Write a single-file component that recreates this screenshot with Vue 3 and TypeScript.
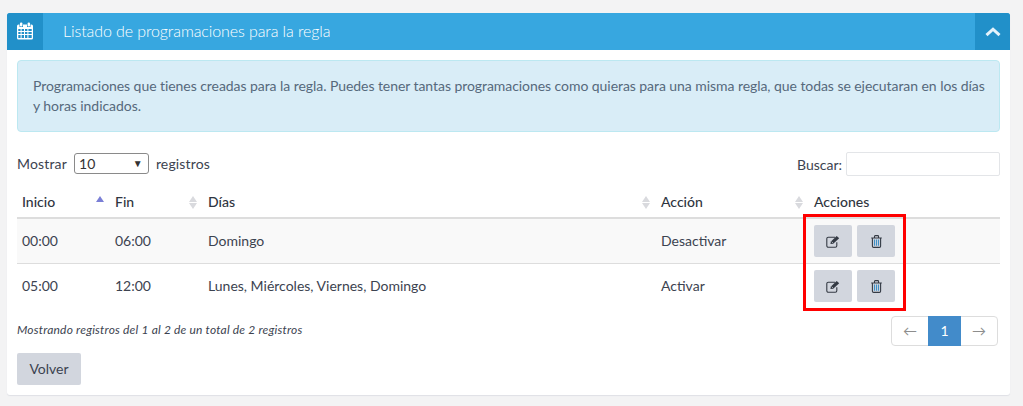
<script setup lang="ts">
interface Row { inicio: string; fin: string; dias: string; accion: string }
const rows: Row[] = [
  { inicio: '00:00', fin: '06:00', dias: 'Domingo', accion: 'Desactivar' },
  { inicio: '05:00', fin: '12:00', dias: 'Lunes, Miércoles, Viernes, Domingo', accion: 'Activar' },
]
</script>

<template>
  <div class="page">
    <section class="panel">
      <header class="head">
        <span class="head-icon">
          <svg width="16" height="18" viewBox="0 0 16 18">
            <rect x="3" y="0.5" width="2.4" height="4" rx="1" fill="#fff"/>
            <rect x="10.6" y="0.5" width="2.4" height="4" rx="1" fill="#fff"/>
            <path fill="#fff" fill-rule="evenodd" d="M1.5 2.5H2.5V5H6V2.5H10V5H13.5V2.5H14.5A1.5 1.5 0 0 1 16 4V16A1.5 1.5 0 0 1 14.5 17.5H1.5A1.5 1.5 0 0 1 0 16V4A1.5 1.5 0 0 1 1.5 2.5ZM1.3 7V9H3.6V7ZM4.6 7V9H7V7ZM8 7V9H10.4V7ZM11.4 7V9H14.7V7ZM1.3 10V12H3.6V10ZM4.6 10V12H7V10ZM8 10V12H10.4V10ZM11.4 10V12H14.7V10ZM1.3 13V16H3.6V13ZM4.6 13V16H7V13ZM8 13V16H10.4V13ZM11.4 13V16H14.7V13Z"/>
          </svg>
        </span>
        <h2 class="title">Listado de programaciones para la regla</h2>
        <span class="head-toggle">
          <svg width="16" height="10" viewBox="0 0 16 10">
            <path d="M1.5 8.2 8 2.2 14.5 8.2" fill="none" stroke="#e4f2fb" stroke-width="3"/>
          </svg>
        </span>
      </header>

      <div class="body">
        <div class="alert">
          Programaciones que tienes creadas para la regla. Puedes tener tantas programaciones como quieras para una misma regla, que todas se ejecutaran en los días y horas indicados.
        </div>

        <div class="toolbar">
          <label class="length">
            Mostrar
            <span class="select">10<i class="caret">▼</i></span>
            registros
          </label>
          <label class="search">Buscar: <span class="search-input"></span></label>
        </div>

        <div class="table-wrap">
          <table class="table">
            <colgroup>
              <col class="c1" /><col class="c2" /><col class="c3" /><col class="c4" /><col class="c5" />
            </colgroup>
            <thead>
              <tr>
                <th>Inicio<span class="sort"><b class="up active"></b></span></th>
                <th>Fin<span class="sort"><b class="up"></b><b class="down"></b></span></th>
                <th>Días<span class="sort"><b class="up"></b><b class="down"></b></span></th>
                <th>Acción<span class="sort"><b class="up"></b><b class="down"></b></span></th>
                <th>Acciones</th>
              </tr>
            </thead>
            <tbody>
              <tr v-for="r in rows" :key="r.inicio">
                <td class="txt">{{ r.inicio }}</td>
                <td class="txt">{{ r.fin }}</td>
                <td class="txt">{{ r.dias }}</td>
                <td class="txt">{{ r.accion }}</td>
                <td class="acts">
                  <div class="act-row">
                    <button class="btn ic" type="button" aria-label="Editar">
                      <svg width="15" height="13" viewBox="0 0 15 13">
                        <path d="M9 2.2H2.3A1.5 1.5 0 0 0 .8 3.7V10.7A1.5 1.5 0 0 0 2.3 12.2H9.3A1.5 1.5 0 0 0 10.8 10.7V7.2" fill="none" stroke="#343a44" stroke-width="1.1"/>
                        <path d="M4.4 9 4.9 6.5 10.7 .9 13.2 3.2 7.2 8.8Z" fill="#343a44"/>
                        <path d="M5.6 6.6 7 8" stroke="#d2d6de" stroke-width=".7"/>
                      </svg>
                    </button>
                    <button class="btn ic" type="button" aria-label="Borrar">
                      <svg width="11" height="13" viewBox="0 0 11 13">
                        <path d="M.2 3H10.8M3.5 3V1.3Q3.5 .6 4.2 .6H6.8Q7.5 .6 7.5 1.3V3M1.4 3V11.2Q1.4 12.4 2.6 12.4H8.4Q9.6 12.4 9.6 11.2V3" fill="none" stroke="#343a44" stroke-width="1.1"/>
                        <path d="M3.5 4.6V10.8M5.5 4.6V10.8M7.5 4.6V10.8" stroke="#3f8fc4" stroke-width="1.1"/>
                      </svg>
                    </button>
                  </div>
                </td>
              </tr>
            </tbody>
          </table>
          <div class="highlight"></div>
        </div>

        <div class="foot">
          <em class="info">Mostrando registros del 1 al 2 de un total de 2 registros</em>
          <nav class="pager">
            <span class="pg">←</span>
            <span class="pg current">1</span>
            <span class="pg">→</span>
          </nav>
        </div>

        <button class="btn back" type="button">Volver</button>
      </div>
    </section>
  </div>
</template>

<style>
html, body { margin: 0; background: #f3f3f4; }
</style>

<style scoped>
.page {
  height: 406px;
  box-sizing: border-box;
  padding: 13px 13px 0 7px;
  background: #f3f3f4;
  font-family: Lato, sans-serif;
  font-size: 14px;
  color: #3c4350;
  overflow: hidden;
}
.panel {
  height: 382px;
  box-sizing: border-box;
  background: #fff;
  border-radius: 3px;
  box-shadow: 0 1px 1px #dfe0e6;
}
.head {
  display: flex;
  align-items: stretch;
  height: 37px;
  background: #37a7e0;
  border-radius: 3px 3px 0 0;
  overflow: hidden;
}
.head-icon, .head-toggle {
  display: flex;
  align-items: center;
  justify-content: center;
  background: #2190c9;
}
.head-icon { width: 36px; padding-bottom: 2px; box-sizing: border-box; }
.head-toggle { width: 35px; margin-left: auto; }
.title {
  margin: 0 0 0 20px;
  font-size: 16px;
  font-weight: 300;
  line-height: 36px;
  letter-spacing: -0.1px;
  color: #fff;
}
.body { padding: 10px 10px 0; }
.alert {
  box-sizing: border-box;
  height: 72px;
  padding: 15px 10px 15px 15px;
  background: #d9edf7;
  border: 1px solid #bce8f1;
  border-radius: 4px;
  line-height: 20px;
  letter-spacing: -0.06px;
  color: #56697c;
}
.toolbar {
  display: flex;
  justify-content: space-between;
  margin-top: 20px;
  height: 24px;
}
.length { display: flex; align-items: center; gap: 7px; height: 22px; letter-spacing: .15px; }
.select {
  position: relative;
  box-sizing: border-box;
  display: block;
  width: 75px;
  height: 21px;
  padding-left: 4px;
  line-height: 19px;
  border: 1px solid #8a8a8a;
  border-radius: 3px;
  background: #fff;
  color: #333;
}
.caret {
  position: absolute;
  right: 5px;
  top: 0;
  font-style: normal;
  font-size: 10px;
  color: #333;
}
.search { display: flex; align-items: center; gap: 3px; }
.search-input {
  display: block;
  box-sizing: border-box;
  width: 154px;
  height: 24px;
  margin-left: 1px;
  border: 1px solid #e3e5e8;
  border-radius: 2px;
  background: #fff;
}
.table-wrap { position: relative; margin-top: 3px; }
.table {
  width: 983px;
  table-layout: fixed;
  border-collapse: separate;
  border-spacing: 0;
}
.c1, .c2 { width: 93px; }
.c3 { width: 453px; }
.c4 { width: 153px; }
th {
  position: relative;
  height: 40px;
  box-sizing: border-box;
  padding: 7px 5px 0;
  text-align: left;
  font-weight: 500;
  border-bottom: 2px solid #ddd;
  color: #2f3540;
}
td {
  height: 44px;
  box-sizing: border-box;
  padding: 0 5px;
}
td.txt { padding-bottom: 2px; }
tbody tr:nth-child(1) td { background: #f9f9f9; }
tbody tr:nth-child(2) td { height: 45px; border-top: 1px solid #ddd; }
.act-row { display: flex; gap: 5px; }
.sort {
  position: absolute;
  right: 5px;
  top: 17px;
  width: 9px;
  height: 13px;
}
.sort b {
  position: absolute;
  left: 0;
  width: 0;
  height: 0;
  border-left: 4.5px solid transparent;
  border-right: 4.5px solid transparent;
}
.up { top: 0; border-bottom: 6px solid #d9dade; }
.down { bottom: 0; border-top: 6px solid #d9dade; }
.sort b.active { border-bottom-color: #7a7fd6; }
.btn {
  border: 0;
  border-radius: 2px;
  background: #d2d6de;
  font-family: inherit;
  padding: 0;
}
.ic {
  display: flex;
  align-items: center;
  justify-content: center;
  width: 38px;
  height: 32px;
}
.highlight {
  position: absolute;
  left: 786px;
  top: 35px;
  width: 103px;
  height: 97px;
  box-sizing: border-box;
  border: 3px solid #f00;
  pointer-events: none;
}
.foot {
  display: flex;
  justify-content: space-between;
  align-items: flex-start;
  margin-top: 8px;
  padding-right: 2px;
}
.info { margin-top: 6px; font-size: 12px; line-height: 16px; letter-spacing: .2px; color: #3c4350; }
.pager {
  display: flex;
  height: 30px;
  box-sizing: border-box;
  border: 1px solid #ddd;
  border-radius: 4px;
}
.pg {
  width: 36px;
  line-height: 28px;
  text-align: center;
  font-size: 14px;
  color: #8d8d8d;
}
.pg.current {
  width: 33px;
  height: 30px;
  margin-top: -1px;
  line-height: 30px;
  background: #428bca;
  color: #fff;
}
.back {
  display: block;
  width: 64px;
  height: 32px;
  margin-top: 7px;
  font-size: 14px;
  line-height: 30px;
  color: #3c4350;
}
</style>
